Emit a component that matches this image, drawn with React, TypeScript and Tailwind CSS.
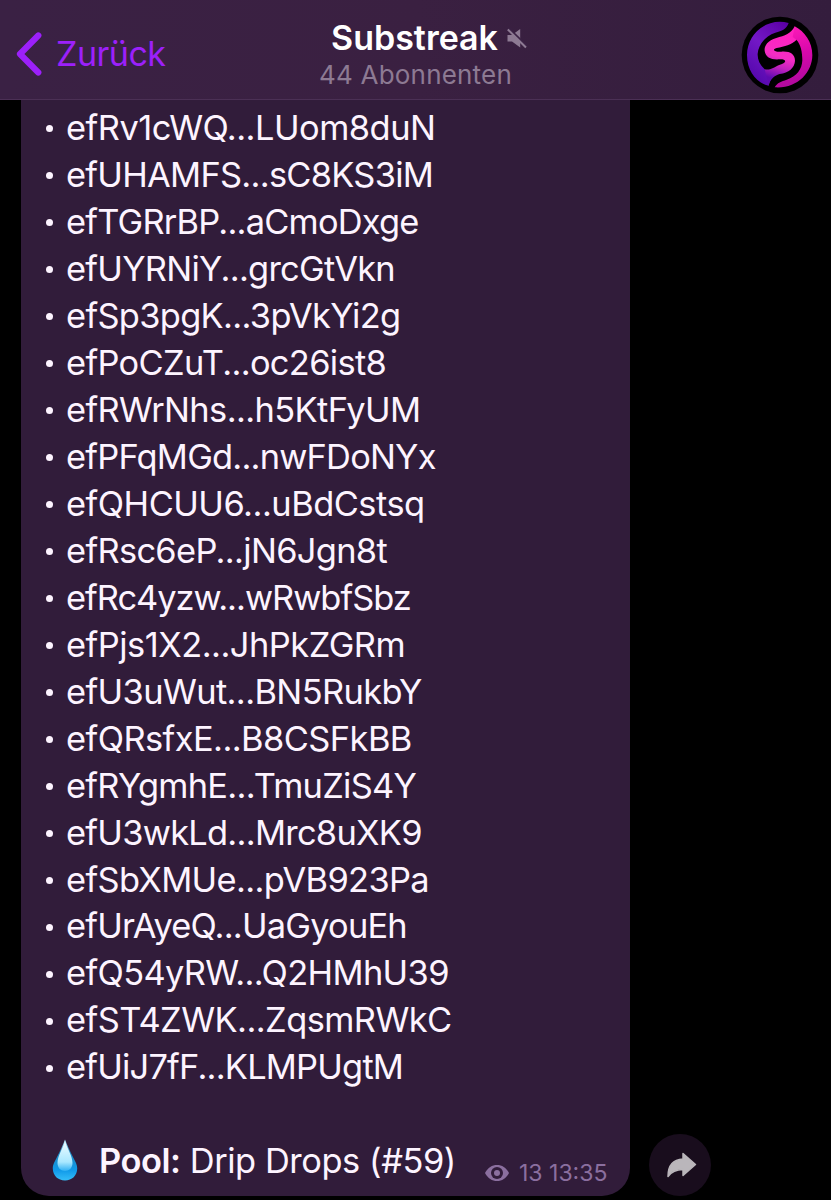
import { clsx } from 'clsx';

interface Address {
  label: string;
  tracking: string;
}

const addresses: Address[] = [
  { label: 'efRv1cWQ...LUom8duN', tracking: 'tracking-[-0.500px]' },
  { label: 'efUHAMFS...sC8KS3iM', tracking: 'tracking-[-0.720px]' },
  { label: 'efTGRrBP...aCmoDxge', tracking: 'tracking-[-0.780px]' },
  { label: 'efUYRNiY...grcGtVkn', tracking: 'tracking-[-0.720px]' },
  { label: 'efSp3pgK...3pVkYi2g', tracking: 'tracking-[-0.670px]' },
  { label: 'efPoCZuT...oc26ist8', tracking: 'tracking-[-0.670px]' },
  { label: 'efRWrNhs...h5KtFyUM', tracking: 'tracking-[-0.610px]' },
  { label: 'efPFqMGd...nwFDoNYx', tracking: 'tracking-[-0.780px]' },
  { label: 'efQHCUU6...uBdCstsq', tracking: 'tracking-[-0.500px]' },
  { label: 'efRsc6eP...jN6Jgn8t', tracking: 'tracking-[-0.670px]' },
  { label: 'efRc4yzw...wRwbfSbz', tracking: 'tracking-[-1px]' },
  { label: 'efPjs1X2...JhPkZGRm', tracking: 'tracking-[-0.500px]' },
  { label: 'efU3uWut...BN5RukbY', tracking: 'tracking-[-0.610px]' },
  { label: 'efQRsfxE...B8CSFkBB', tracking: 'tracking-[-0.560px]' },
  { label: 'efRYgmhE...TmuZiS4Y', tracking: 'tracking-[-0.720px]' },
  { label: 'efU3wkLd...Mrc8uXK9', tracking: 'tracking-[-0.720px]' },
  { label: 'efSbXMUe...pVB923Pa', tracking: 'tracking-[-0.640px]' },
  { label: 'efUrAyeQ...UaGyouEh', tracking: 'tracking-[-0.780px]' },
  { label: 'efQ54yRW...Q2HMhU39', tracking: 'tracking-[-0.640px]' },
  { label: 'efST4ZWK...ZqsmRWkC', tracking: 'tracking-[-0.560px]' },
  { label: 'efUiJ7fF...KLMPUgtM', tracking: 'tracking-[-0.780px]' },
];

function Logo() {
  return (
    <svg width="78" height="78" viewBox="9 9 234 234" className="block">
      <defs>
        <linearGradient id="violet" x1="0.9" y1="0" x2="0.3" y2="1">
          <stop offset="0" stopColor="#5b00a4" />
          <stop offset="0.5" stopColor="#7318c6" />
          <stop offset="1" stopColor="#5407ac" />
        </linearGradient>
        <linearGradient id="ribbon" gradientUnits="userSpaceOnUse" x1="126" y1="60" x2="85" y2="190">
          <stop offset="0" stopColor="#ff22c0" />
          <stop offset="0.5" stopColor="#f42dc4" />
          <stop offset="0.72" stopColor="#c422bd" />
          <stop offset="1" stopColor="#5e0ab0" />
        </linearGradient>
        <linearGradient id="pink" x1="0.3" y1="0" x2="0.5" y2="1">
          <stop offset="0" stopColor="#ff1cb8" />
          <stop offset="0.5" stopColor="#d808ac" />
          <stop offset="1" stopColor="#ad0a9c" />
        </linearGradient>
      </defs>
      <circle cx="126" cy="126" r="115" fill="#000" />
      <path
        d="M152 30C90 12 27 60 27 126C27 175 56 210 92 218C94 208 99 198 105 190L80 169C66 155 58 140 59 122C61 94 84 68 112 59C132 54 146 48 152 30Z"
        fill="url(#violet)"
      />
      <path
        d="M170 40C160 62 140 68 115 75C90 82 78 98 80 114C83 134 100 141 125 139C144 138 147 147 132 153C112 159 100 173 80 169L92 218C96 200 108 188 125 183C152 180 170 164 171 143C171 124 156 114 130 116C106 118 102 108 116 105C140 100 160 95 176 80Z"
        fill="url(#ribbon)"
      />
      <path
        d="M170 40C200 55 223 88 223 126C223 180 176 228 110 223C118 208 130 206 146 200C176 190 192 170 193 142C193 116 188 94 175 80L164 72Z"
        fill="url(#pink)"
      />
    </svg>
  );
}

function MutedIcon() {
  return (
    <svg width="21" height="21" viewBox="0 0 21 21" className="block">
      <path d="M0.500 7H5L13.200 1V19.500L5 13.500H0.500Z" fill="#8d7a93" />
      <path d="M1 -0.500L20 18" stroke="#3a2144" strokeWidth="2" />
      <path d="M0.800 1.500L19 19.500" stroke="#8d7a93" strokeWidth="2" />
    </svg>
  );
}

function DropIcon() {
  return (
    <svg width="26" height="42" viewBox="0 0 26 42" className="block">
      <defs>
        <linearGradient id="drop" x1="0" y1="0" x2="0" y2="1">
          <stop offset="0" stopColor="#bceeff" />
          <stop offset="0.3" stopColor="#1f86bd" />
          <stop offset="0.75" stopColor="#109ae9" />
          <stop offset="1" stopColor="#35bdf8" />
        </linearGradient>
        <linearGradient id="shine" x1="0" y1="0" x2="0" y2="1">
          <stop offset="0" stopColor="#f2fdff" />
          <stop offset="0.7" stopColor="#a9e8ff" />
          <stop offset="1" stopColor="#2fb0f3" />
        </linearGradient>
      </defs>
      <path d="M13 0.500C15 6 18 12 21.500 19C24 24 25.200 26 25.200 29.500C25.200 36.500 20 41.500 13 41.500S0.800 36.500 0.800 29.500C0.800 26 2 24 4.500 19C8 12 11 6 13 0.500Z" fill="url(#drop)" />
      <path d="M13 2C15 9 20.500 17 20.500 24C20.500 29 17 32 13 32S5.500 29 5.500 24C5.500 17 11 9 13 2Z" fill="url(#shine)" />
    </svg>
  );
}

function Header() {
  return (
    <header className="grid h-[100px] grid-cols-[1fr_auto_1fr] border-b border-[#4b3055] bg-linear-to-r from-[#3a2144] via-[#3a2041] to-[#341d3d]">
      <div className="flex items-start pt-[31px] pl-4 text-[#9c20fa]">
        <svg width="26" height="46" viewBox="0 0 26 46" className="block">
          <path d="M22.300 4.500L4 23L22.300 41.500" fill="none" stroke="currentColor" strokeWidth="6.200" strokeLinecap="round" strokeLinejoin="round" />
        </svg>
        <span className="ml-[14px] text-[34px] leading-[46px] tracking-[-0.500px]">Zurück</span>
      </div>
      <div className="pt-[17px] text-center">
        <div className="flex items-center justify-center gap-[9px] pl-[28px]">
          <h1 className="text-[34px] leading-[42px] font-semibold text-white">Substreak</h1>
          <MutedIcon />
        </div>
        <p className="text-[26px] leading-[31px] tracking-[0.200px] text-[#8d7a93]">44 Abonnenten</p>
      </div>
      <div className="flex justify-end pt-4 pr-[12px]">
        <Logo />
      </div>
    </header>
  );
}

export default function App() {
  return (
    <div className="h-[1200px] w-[831px] overflow-hidden bg-black font-['Inter',sans-serif] whitespace-nowrap">
      <Header />
      <main className="flex items-end pl-[21px]">
        <article className="h-[1096px] w-[609px] rounded-b-[28px] bg-[#311c3a] pt-[5px] pl-6 text-[34.400px] leading-[46.970px] text-[#fdf4ff]">
          <ul>
            {addresses.map((address) => (
              <li key={address.label} className="flex h-[46.970px] items-center">
                <span className="mt-px ml-[1px] size-[7px] rounded-full bg-[#fdf4ff]" />
                <span className={clsx('ml-[13px]', address.tracking)}>{address.label}</span>
              </li>
            ))}
          </ul>
          <div className="mt-[46.970px] flex h-[46.970px] items-center">
            <span className="mb-1 ml-[7px]">
              <DropIcon />
            </span>
            <p className="ml-[21px] w-[385px] tracking-[-0.440px]">
              <b className="font-semibold">Pool:</b> Drip Drops (#59)
            </p>
            <div className="flex items-center gap-[9px] pt-[23px] text-[#8b6f9f]">
              <svg width="26" height="20" viewBox="0 0 26 20" className="block">
                <path d="M1 10C4 4.500 8 2 13 2S22 4.500 25 10C22 15.500 18 18 13 18S4 15.500 1 10Z" fill="currentColor" />
                <circle cx="13" cy="10" r="6" fill="#311c3a" />
                <circle cx="13" cy="10" r="3" fill="currentColor" />
              </svg>
              <span className="text-[23px] leading-[28px]">13 13:35</span>
            </div>
          </div>
        </article>
        <button type="button" aria-label="Teilen" className="ml-[19px] flex size-[62px] items-center justify-center rounded-full bg-[#190d1d]">
          <svg width="30" height="26" viewBox="0 0 30 26" className="ml-1 block">
            <path d="M16 1.500V7C6 7.500 1 14 1 24.500C5 19 9.500 17.500 16 17.500V23.500L28.500 12.500Z" fill="#bab6bb" stroke="#bab6bb" strokeWidth="1.500" strokeLinejoin="round" />
          </svg>
        </button>
      </main>
    </div>
  );
}
